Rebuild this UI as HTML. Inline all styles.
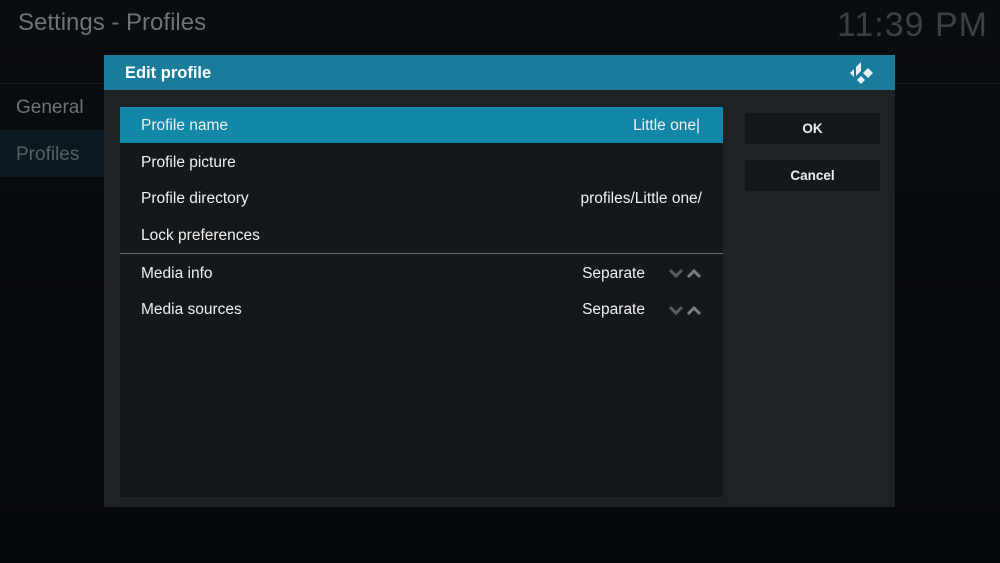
<!DOCTYPE html>
<html><head><style>
*{margin:0;padding:0;box-sizing:border-box}
body{width:1000px;height:563px;overflow:hidden;background:linear-gradient(180deg,#0a0d10 0%,#05080a 100%);font-family:"Liberation Sans","DejaVu Sans",sans-serif;position:relative;color:#eee}
.a{position:absolute}
.t{font-size:15.5px;color:#f0f0f0}
</style></head><body>
<div class="a" style="left:18px;top:9px;font-size:24px;color:#6f7376">Settings - Profiles</div>
<div class="a" style="right:12px;top:6px;font-size:34px;color:#3c4043;letter-spacing:1px">11:39 PM</div>
<div class="a" style="left:0;top:83px;width:1000px;height:1px;background:#161b1f"></div>
<div class="a" style="left:16px;top:97px;font-size:19px;color:#6f7376">General</div>
<div class="a" style="left:0;top:130px;width:104px;height:47px;background:#0b1a20"></div>
<div class="a" style="left:16px;top:144px;font-size:19px;color:#566064">Profiles</div>

<div class="a" style="left:104px;top:55px;width:791px;height:452px;background:#1e2225"></div>
<div class="a" style="left:104px;top:55px;width:791px;height:35px;background:#1a7b9b"></div>
<div class="a" style="left:125px;top:64px;font-size:16.5px;font-weight:bold;color:#fff">Edit profile</div>
<svg class="a" style="left:848px;top:59px" width="30" height="30" viewBox="0 0 30 30">
<path d="M2 14 L6 10 L6 18Z M8 8 L13 3 L13 12 L8 17Z M15 14 L20 9 L25 14 L20 19Z M9 21 L13 17 L17 21 L13 25Z" fill="#e8f0f2"/>
</svg>

<div class="a" style="left:120px;top:107px;width:603px;height:390px;background:#15181b"></div>
<div class="a" style="left:120px;top:107px;width:603px;height:36px;background:#1387a7"></div>
<div class="a t" style="left:141px;top:117px">Profile name</div>
<div class="a t" style="right:300px;top:117px">Little one|</div>
<div class="a t" style="left:141px;top:154px">Profile picture</div>
<div class="a t" style="left:141px;top:190px">Profile directory</div>
<div class="a t" style="right:298px;top:190px">profiles/Little one/</div>
<div class="a t" style="left:141px;top:227px">Lock preferences</div>
<div class="a" style="left:120px;top:253px;width:603px;height:1px;background:#6a6e70"></div>
<div class="a t" style="left:141px;top:265px">Media info</div>
<div class="a t" style="right:355px;top:265px">Separate</div>
<div class="a t" style="left:141px;top:301px">Media sources</div>
<div class="a t" style="right:355px;top:301px">Separate</div>
<svg class="a" style="left:669px;top:268px" width="34" height="12"><path d="M1 2 L7 8 L13 2" stroke="#5a5e60" stroke-width="3" fill="none"/><path d="M19 9 L25 3 L31 9" stroke="#7a7e80" stroke-width="3" fill="none"/></svg>
<svg class="a" style="left:669px;top:305px" width="34" height="12"><path d="M1 2 L7 8 L13 2" stroke="#5a5e60" stroke-width="3" fill="none"/><path d="M19 9 L25 3 L31 9" stroke="#7a7e80" stroke-width="3" fill="none"/></svg>

<div class="a" style="left:745px;top:113px;width:135px;height:31px;background:#15181a;text-align:center;line-height:31px;font-size:13.5px;font-weight:bold">OK</div>
<div class="a" style="left:745px;top:160px;width:135px;height:31px;background:#15181a;text-align:center;line-height:31px;font-size:13.5px;font-weight:bold">Cancel</div>
</body></html>
